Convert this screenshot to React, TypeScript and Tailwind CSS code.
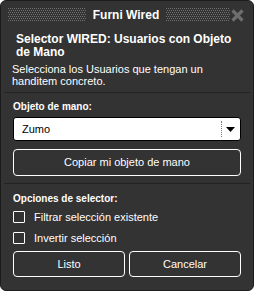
import React from "react";

function Dots({ width }: { width: number }) {
  const rects: React.ReactElement[] = [];
  for (let y = 0; y < 14; y += 2) {
    for (let x = 0; x < width; x += 2) {
      rects.push(<rect key={`${x}-${y}`} x={x + (y % 4 === 0 ? 0 : 1)} y={y} width="1" height="1" fill="#707070" />);
    }
  }
  return (
    <svg width={width} height="14" shapeRendering="crispEdges" className="shrink-0">
      {rects}
    </svg>
  );
}

function CloseIcon() {
  return (
    <svg width="15" height="15" viewBox="0 0 15 15">
      <path d="M2.5 2.5 L12.5 12.5 M12.5 2.5 L2.5 12.5" stroke="#6e6e6e" strokeWidth="3.2" />
    </svg>
  );
}

function Checkbox({ label }: { label: string }) {
  return (
    <label className="flex items-center gap-[9px] h-[16px]">
      <span className="w-[12px] h-[12px] border border-white rounded-[1px]" />
      <span className="text-[11px] text-white">{label}</span>
    </label>
  );
}

export default function App() {
  return (
    <div className="bg-white w-[255px] h-[293px]" style={{ fontFamily: '"Liberation Sans", Arial, sans-serif' }}>
      <div className="w-[254px] h-[291px] bg-[#333333] border border-[#1c1c1c] rounded-[6px] flex flex-col overflow-hidden">
        {/* title bar */}
        <div className="flex items-center justify-between h-[28px] pl-[7px] pr-[8px]">
          <Dots width={78} />
          <span className="text-white font-bold text-[12px]">Furni Wired</span>
          <div className="flex items-center">
            <Dots width={64} />
            <CloseIcon />
          </div>
        </div>

        <div className="px-[11px] pt-[4px]">
          <h1 className="text-white font-bold text-[12px] leading-[13px] pl-[4px]">
            Selector WIRED: Usuarios con Objeto de Mano
          </h1>
          <p className="text-white text-[11px] leading-[12px] mt-[4px]">
            Selecciona los Usuarios que tengan un handitem concreto.
          </p>
        </div>

        <div className="mx-[3px] mt-[5px] border-t border-[#222222]" />

        <div className="px-[12px] pt-[8px] flex flex-col">
          <span className="text-white font-bold text-[10px] leading-[12px]">Objeto de mano:</span>
          <div className="mt-[4px] h-[24px] bg-white rounded-[3px] border border-black flex items-center">
            <span className="flex-1 pl-[8px] text-[11px] text-black">Zumo</span>
            <span className="h-[16px] border-l border-dotted border-[#777]" />
            <svg width="18" height="10" viewBox="0 0 18 10">
              <path d="M4 3 L13 3 L8.5 8 Z" fill="#000" />
            </svg>
          </div>
          <button className="mt-[8px] h-[27px] border border-white rounded-[4px] text-white text-[11px]">
            Copiar mi objeto de mano
          </button>
        </div>

        <div className="mx-[3px] mt-[7px] border-t border-[#222222]" />

        <div className="px-[12px] pt-[9px] flex flex-col">
          <span className="text-white font-bold text-[10px] leading-[12px]">Opciones de selector:</span>
          <div className="mt-[4px] flex flex-col gap-[5px]">
            <Checkbox label="Filtrar selección existente" />
            <Checkbox label="Invertir selección" />
          </div>
          <div className="mt-[5px] flex gap-[4px]">
            <button className="flex-1 h-[26px] border border-white rounded-[4px] text-white text-[11px]">Listo</button>
            <button className="flex-1 h-[26px] border border-white rounded-[4px] text-white text-[11px]">Cancelar</button>
          </div>
        </div>
      </div>
    </div>
  );
}
